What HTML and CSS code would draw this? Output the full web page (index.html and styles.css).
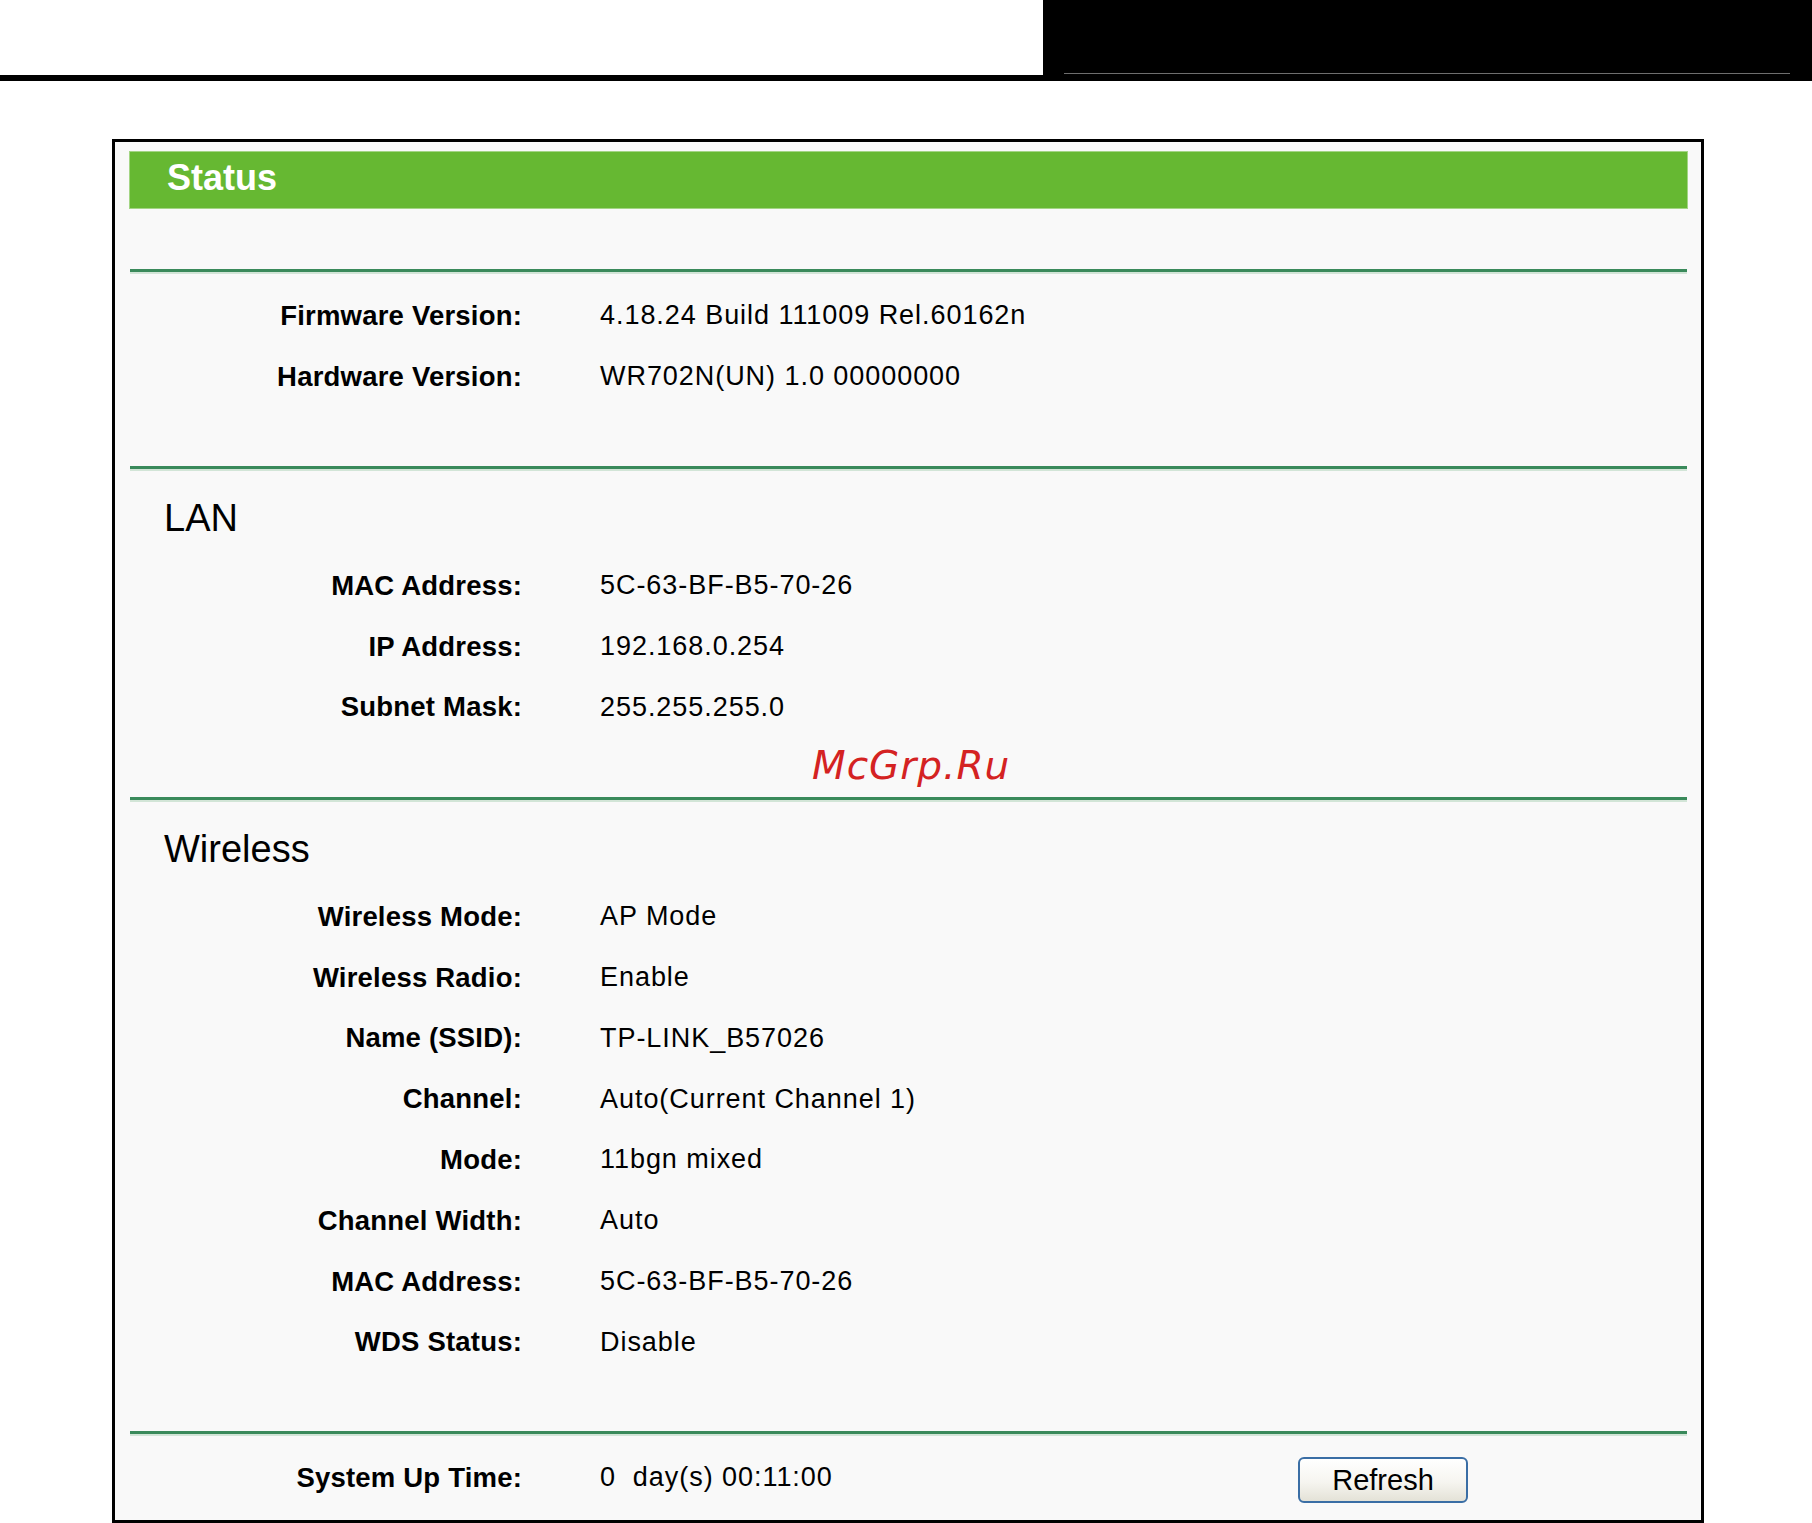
FILE: index.html
```html
<!DOCTYPE html>
<html>
<head>
<meta charset="utf-8">
<title>Status</title>
<link rel="stylesheet" href="styles.css">
</head>
<body>
<div class="top">
  <div class="top-left"></div>
  <div class="top-block"><div class="top-line"></div></div>
</div>
<div class="top-bar"></div>

<div class="frame">
  <div class="title">Status</div>

  <div class="sep sep-first"></div>
  <div class="rows rows-first">
    <div class="row"><div class="label">Firmware Version:</div><div class="value">4.18.24 Build 111009 Rel.60162n</div></div>
    <div class="row"><div class="label">Hardware Version:</div><div class="value">WR702N(UN) 1.0 00000000</div></div>
  </div>

  <div class="sep sep-gap"></div>
  <h2 class="heading">LAN</h2>
  <div class="rows">
    <div class="row"><div class="label">MAC Address:</div><div class="value">5C-63-BF-B5-70-26</div></div>
    <div class="row"><div class="label">IP Address:</div><div class="value">192.168.0.254</div></div>
    <div class="row"><div class="label">Subnet Mask:</div><div class="value">255.255.255.0</div></div>
  </div>

  <div class="sep sep-gap"></div>
  <h2 class="heading">Wireless</h2>
  <div class="rows">
    <div class="row"><div class="label">Wireless Mode:</div><div class="value">AP Mode</div></div>
    <div class="row"><div class="label">Wireless Radio:</div><div class="value">Enable</div></div>
    <div class="row"><div class="label">Name (SSID):</div><div class="value">TP-LINK_B57026</div></div>
    <div class="row"><div class="label">Channel:</div><div class="value">Auto(Current Channel 1)</div></div>
    <div class="row"><div class="label">Mode:</div><div class="value">11bgn mixed</div></div>
    <div class="row"><div class="label">Channel Width:</div><div class="value">Auto</div></div>
    <div class="row"><div class="label">MAC Address:</div><div class="value">5C-63-BF-B5-70-26</div></div>
    <div class="row"><div class="label">WDS Status:</div><div class="value">Disable</div></div>
  </div>

  <div class="sep sep-last"></div>
  <div class="row row-uptime">
    <div class="label">System Up Time:</div>
    <div class="value value-uptime">0&nbsp; day(s) 00:11:00</div>
    <button class="btn" type="button">Refresh</button>
  </div>

  <div class="watermark">McGrp.Ru</div>
</div>
</body>
</html>
```
FILE: styles.css
```css
html, body {
  margin: 0;
  padding: 0;
  background: #ffffff;
}

body {
  font-family: "Liberation Sans", Arial, sans-serif;
  color: #000;
}

.top {
  display: flex;
  height: 75px;
}

.top-left {
  flex: 1;
  background: #ffffff;
}

.top-block {
  width: 769px;
  background: #000;
  display: flex;
  align-items: flex-end;
  padding: 0 22px 1px 21px;
  box-sizing: border-box;
}

.top-line {
  flex: 1;
  height: 1px;
  background: #6e6e6e;
}

.top-bar {
  height: 6px;
  background: #000;
}

.frame {
  position: relative;
  margin: 58px 0 0 112px;
  width: 1592px;
  box-sizing: border-box;
  border: 3px solid #000;
  background: #f9f9f9;
  padding: 10px 0 12px 0;
}

.title {
  margin: 0 14px 0 15px;
  height: 56px;
  line-height: 52px;
  padding-left: 37px;
  background: #66b832;
  box-shadow: 0 0 0 1px #a3d584;
  color: #fff;
  font-weight: bold;
  font-size: 36px;
}

.sep {
  margin: 0 14px 0 15px;
  height: 3px;
  background: #3a8a5b;
  border-bottom: 2px solid #d2e5d7;
}

.sep-first {
  margin-top: 61px;
}

.sep-gap {
  margin-top: 59px;
}

.sep-last {
  margin-top: 58px;
}

.rows {
  margin-top: 14.5px;
}

.rows-first {
  margin-top: 11px;
}

.row {
  display: flex;
  align-items: center;
  height: 60.8px;
}

.rows-first .row {
  height: 61px;
}

.label {
  flex: 0 0 407px;
  text-align: right;
  font-weight: bold;
  font-size: 27.5px;
  letter-spacing: 0.2px;
}

.value {
  margin-left: 78px;
  font-size: 27px;
  letter-spacing: 0.95px;
  white-space: nowrap;
}

.heading {
  margin: 24px 0 0 49px;
  font-weight: normal;
  font-size: 38px;
  line-height: 46px;
}

.row-uptime {
  margin-top: 11.5px;
  height: 61px;
}

.value-uptime {
  flex: 0 0 698px;
}

.btn {
  margin-top: 5px;
  width: 170px;
  height: 46px;
  border: 2px solid #3a6ea5;
  border-radius: 6px;
  background: linear-gradient(#ffffff, #f6f5f0 55%, #e4e2d7);
  font-family: "Liberation Sans", Arial, sans-serif;
  font-size: 29px;
  color: #000;
  padding: 0;
}

.watermark {
  position: absolute;
  left: 697px;
  top: 604px;
  font-family: "DejaVu Sans", Verdana, sans-serif;
  font-style: italic;
  font-size: 39px;
  line-height: 40px;
  letter-spacing: 1px;
  color: #d42222;
}
```
